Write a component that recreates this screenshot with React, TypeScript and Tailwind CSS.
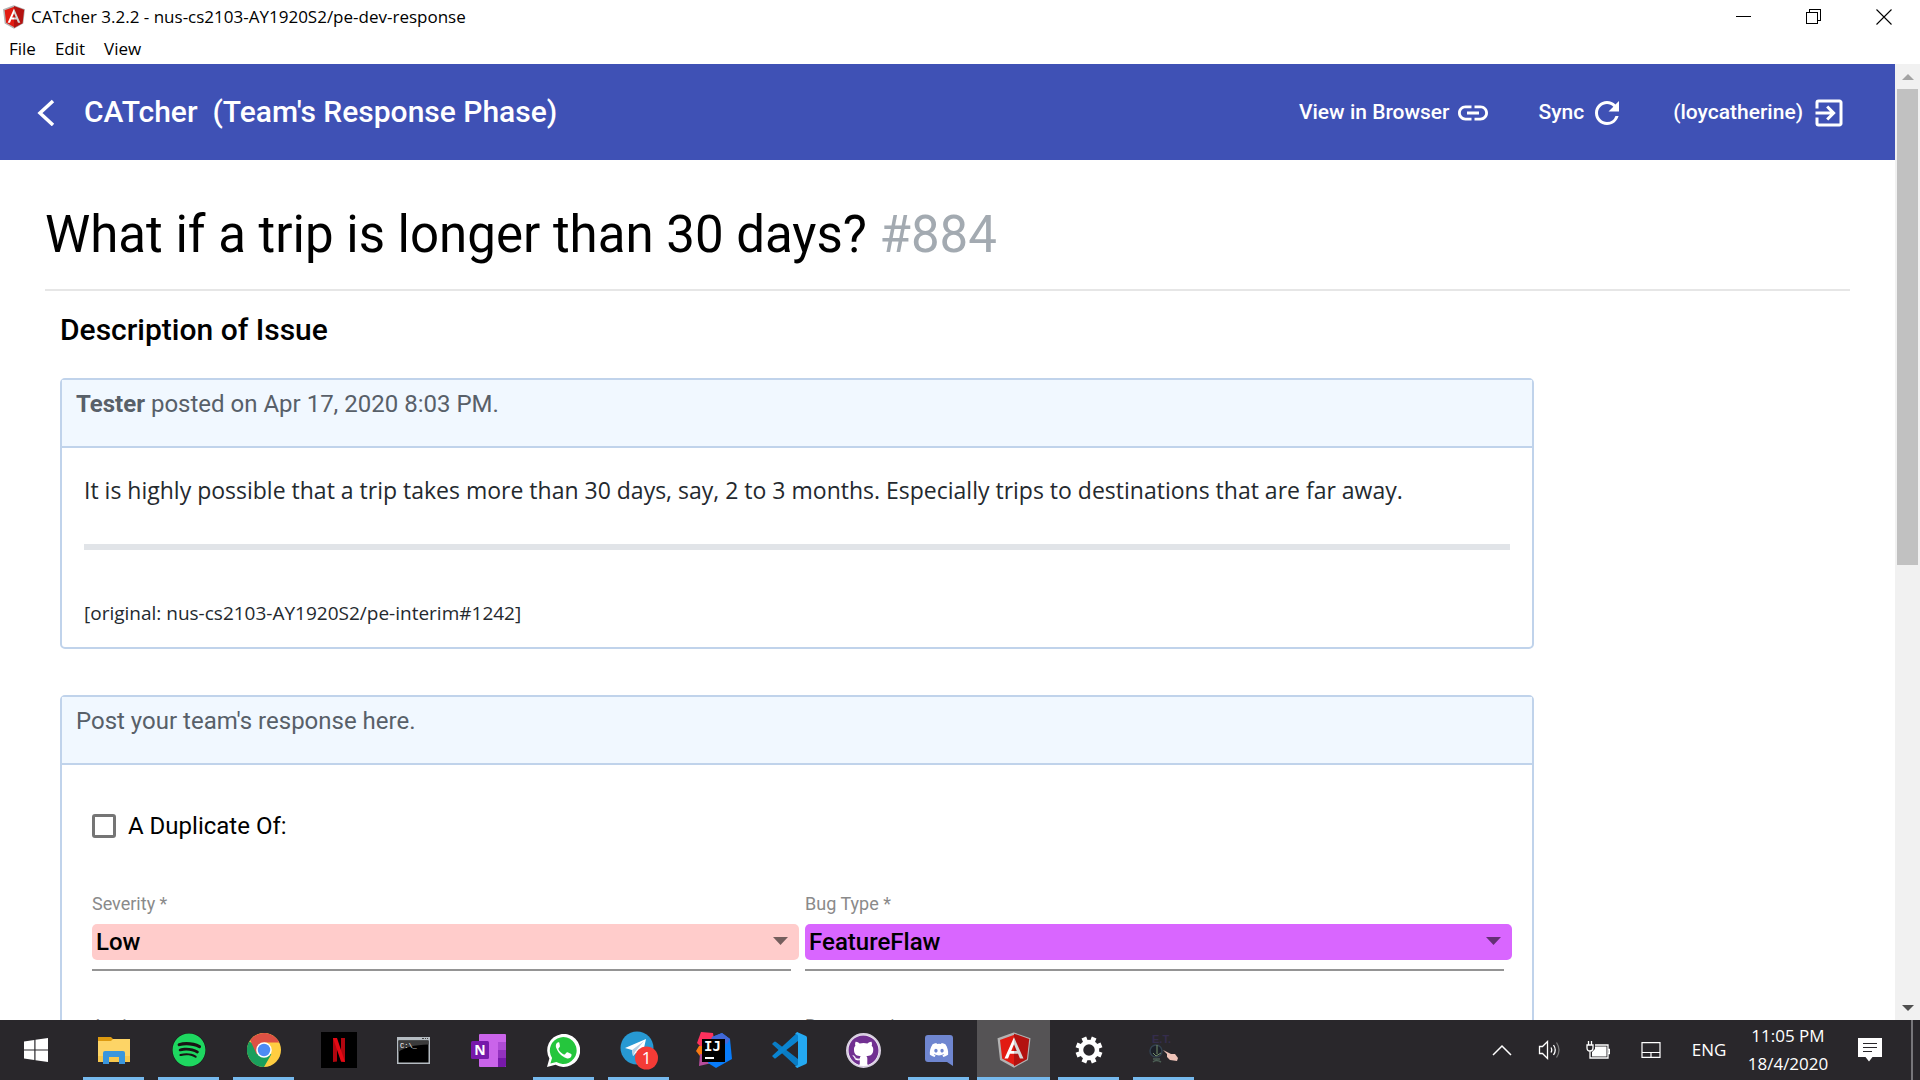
import type { ReactNode } from "react";
import { MdExitToApp, MdLink, MdRefresh } from "react-icons/md";
import { FaDiscord, FaGithub, FaSpotify } from "react-icons/fa";

function AngularLogo({ className }: { className: string }) {
  return (
    <svg viewBox="22 20 206 220" className={className} aria-hidden="true">
      <path d="M125 30 31.9 63.2l14.2 123.1L125 230l78.9-43.7 14.2-123.1z" fill="#e21b12" stroke="#b3b3b3" strokeWidth="14" />
      <path d="M125 30v200l78.9-43.7 14.2-123.1z" fill="#b31210" />
      <path d="M125 52 66.8 182.6h21.7l11.7-29.2H125v-18h-17l17-40.9z" fill="#fff" />
      <path d="m125 52 58 130.6h-21.700l-11.700-29.200H125v-18h17l-17-40.900z" fill="#d6d6d6" />
    </svg>
  );
}

function TitleBar() {
  return (
    <div className="bg-white font-['Open_Sans',sans-serif] text-[17px] text-black">
      <div className="flex h-[34px] items-center">
        <AngularLogo className="ml-0.5 h-6 w-6" />
        <span className="ml-[5px] flex-1 whitespace-nowrap">CATcher 3.2.2 - nus-cs2103-AY1920S2/pe-dev-response</span>
        <div className="flex h-full pr-px">
          <button aria-label="Minimize" className="flex w-[70px] items-center justify-center">
            <svg className="h-4 w-4" viewBox="0 0 16 16" shapeRendering="crispEdges"><path d="M0 7.500h15" stroke="#000" /></svg>
          </button>
          <button aria-label="Restore" className="flex w-[70px] items-center justify-center">
            <svg className="h-4 w-4" viewBox="0 0 16 16" fill="none" stroke="#000" shapeRendering="crispEdges">
              <path d="M.5 3.500h11v11H.5zM3.500 3.500v-3h11v11h-3" />
            </svg>
          </button>
          <button aria-label="Close" className="flex w-[70px] items-center justify-center">
            <svg className="h-4 w-4" viewBox="0 0 16 16"><path d="m.5.5 15 15m0-15-15 15" stroke="#000" strokeWidth="1.100" /></svg>
          </button>
        </div>
      </div>
      <nav className="flex h-[30px] items-start gap-[19px] pl-[9px]">
        <button className="leading-[30px]">File</button>
        <button className="leading-[30px]">Edit</button>
        <button className="leading-[30px]">View</button>
      </nav>
    </div>
  );
}

function AppHeader() {
  return (
    <header className="flex h-24 items-center bg-[#3f51b5] pr-12 pl-9 font-medium text-white">
      <button aria-label="Back" className="w-12">
        <svg className="h-7 w-5" viewBox="0 0 20 28" fill="none" stroke="currentColor" strokeWidth="3.500"><path d="M17 3 4 15l13 12" /></svg>
      </button>
      <h2 className="flex-1 text-[30px] leading-9 whitespace-pre">CATcher  (Team's Response Phase)</h2>
      <div className="flex items-center gap-12 pt-0.5 text-[21px]">
        <a href="#browser" className="flex items-center gap-[5px]">
          View in Browser <MdLink className="h-9 w-9" />
        </a>
        <button className="flex items-center gap-[5px]">
          Sync <MdRefresh className="h-9 w-9" />
        </button>
        <button className="flex items-center gap-2">
          (loycatherine) <MdExitToApp className="h-9 w-9" />
        </button>
      </div>
    </header>
  );
}

function Card({ title, children }: { title: ReactNode; children: ReactNode }) {
  return (
    <section className="rounded-[5px] border-2 border-[#c0d3eb] bg-white">
      <div className="border-b-2 border-[#c0d3eb] bg-[#f1f8ff] px-[14px] pt-1.5 pb-6 text-2xl leading-9 text-[#586069]">{title}</div>
      {children}
    </section>
  );
}

function Field({ id, label, value, color }: { id: string; label: string; value: string; color: string }) {
  return (
    <div className="flex flex-col">
      <label htmlFor={id} className="text-lg leading-6 text-[#8a8a8a]">{label}</label>
      <div className="relative mt-2">
        <select id={id} defaultValue={value} className={"block h-9 w-full appearance-none rounded-[5px] pl-1 text-2xl leading-9 font-medium text-black " + color}>
          <option>{value}</option>
        </select>
        <svg className="pointer-events-none absolute top-[13px] right-[11px] h-2 w-[15px]" viewBox="0 0 15 8"><path d="M0 0h15L7.500 8z" fill="#000" fillOpacity=".54" /></svg>
      </div>
      <div className="mt-[9px] mr-2 h-0.5 bg-[#949494]" />
    </div>
  );
}

function IssuePage() {
  return (
    <main className="px-[45px] pt-[45px]">
      <h1 className="border-b-2 border-[#e6e6e6] pb-6 text-[51px] leading-[60px] text-black">
        What if a trip is longer than 30 days? <span className="text-[#a3aab1]">#884</span>
      </h1>
      <div className="w-5/6 px-[15px] pt-[19px]">
        <h3 className="mb-7 text-[30px] leading-10 font-medium text-black">Description of Issue</h3>
        <Card title={<><strong className="font-bold">Tester</strong> posted on Apr 17, 2020 8:03 PM.</>}>
          <div className="px-[22px] pt-6 pb-5 font-['Open_Sans',sans-serif] text-[#24292e]">
            <p className="text-[23px] leading-9">
              It is highly possible that a trip takes more than 30 days, say, 2 to 3 months. Especially trips to destinations that are far away.
            </p>
            <hr className="mt-9 mb-[50px] h-1.5 border-0 bg-[#e1e4e8]" />
            <p className="text-[19px] leading-[27px]">[original: nus-cs2103-AY1920S2/pe-interim#1242]</p>
          </div>
        </Card>
        <div className="mt-[46px]">
          <Card title="Post your team's response here.">
            <div className="pt-[43px] pr-5 pb-10 pl-[30px]">
              <label className="mb-12 flex w-fit items-center gap-3 text-2xl leading-9 text-black">
                <input type="checkbox" className="h-6 w-6 appearance-none rounded-[3px] border-3 border-[#757575] checked:bg-[#3f51b5]" />
                A Duplicate Of:
              </label>
              <div className="grid grid-cols-2 gap-x-1.5 gap-y-[43px]">
                <Field id="severity" label="Severity *" value="Low" color="bg-[#ffcccb]" />
                <Field id="type" label="Bug Type *" value="FeatureFlaw" color="bg-[#d966ff]" />
                <Field id="assignee" label="Assignee" value="" color="bg-white" />
                <Field id="response" label="Response *" value="" color="bg-white" />
              </div>
            </div>
          </Card>
        </div>
      </div>
    </main>
  );
}

function ScrollBar() {
  return (
    <div className="flex w-[25px] flex-col bg-[#f1f1f1] px-0.5">
      <div className="flex h-[25px] items-center justify-center">
        <svg className="h-1.5 w-3" viewBox="0 0 12 6"><path d="M0 6h12L6 0z" fill="#a3a3a3" /></svg>
      </div>
      <div className="flex-1">
        <div className="h-[52.500%] bg-[#c1c1c1]" />
      </div>
      <div className="flex h-[25px] items-center justify-center">
        <svg className="h-1.5 w-3" viewBox="0 0 12 6"><path d="M0 0h12L6 6z" fill="#505050" /></svg>
      </div>
    </div>
  );
}

const glyph = "h-9 w-9";

function TelegramIcon() {
  return (
    <svg className="h-10 w-10" viewBox="0 0 40 40" aria-hidden="true">
      <circle cx="18" cy="18" r="16.500" fill="#2799d3" />
      <path d="M6 18 27 9l-4 18-6-4-3 3-1-6z" fill="#fff" />
      <path d="m13 20 12-9-9 11-2 4z" fill="#b5cfe4" />
      <circle cx="27.500" cy="28" r="11.500" fill="#f43b36" />
      <text x="27.500" y="34" textAnchor="middle" fontSize="17" fill="#fff" fontFamily="Open Sans">1</text>
    </svg>
  );
}

const tasks: { name: string; open?: boolean; active?: boolean; icon: ReactNode }[] = [
  {
    name: "File Explorer",
    open: true,
    icon: (
      <svg className="h-8 w-8" viewBox="0 0 32 32">
        <path d="M0 3h13l2 2v4H0z" fill="#dd9a10" />
        <path d="M0 7h13l2-2h17v23H0z" fill="#fdd466" />
        <path d="M0 22h32v6H0z" fill="#f8c84d" />
        <path d="M5 30V19q0-2 2-2h18q2 0 2 2v11h-6v-7H11v7z" fill="#3a96dd" />
      </svg>
    ),
  },
  {
    name: "Spotify",
    open: true,
    icon: <span className="rounded-full bg-[#191414]"><FaSpotify className="h-[34px] w-[34px] text-[#1ed760]" /></span>,
  },
  {
    name: "Chrome",
    open: true,
    icon: (
      <svg className="h-[34px] w-[34px]" viewBox="0 0 48 48">
        <circle cx="24" cy="24" r="24" fill="#ffcd41" />
        <path d="M24 24 3.200 12A24 24 0 0 0 24 48l10.400-18z" fill="#1a9f5c" />
        <path d="M24 13.500h21.600A24 24 0 0 0 4.500 10.200L13.600 30 24 24z" fill="#dd5144" />
        <circle cx="24" cy="24" r="11" fill="#fff" />
        <circle cx="24" cy="24" r="8.800" fill="#4c8bf5" />
      </svg>
    ),
  },
  {
    name: "Netflix",
    icon: (
      <svg className={glyph} viewBox="0 0 36 36">
        <path d="M0 0h36v36H0z" fill="#000" />
        <path d="M12 6h4v23.500l-4 .5zM20 6h4v24l-4-.5z" fill="#b1060f" />
        <path d="M12 6h4l8 24-4-.5z" fill="#e50914" />
      </svg>
    ),
  },
  {
    name: "Command Prompt",
    icon: (
      <svg className="h-[27px] w-[33px]" viewBox="0 0 33 27">
        <path d="M0 0h33v27H0z" fill="#b5bcc2" />
        <path d="M1.500 3.500h30v22h-30z" fill="#000" />
        <path d="M1.500 3.500h30v4Q10 8 1.500 15z" fill="#3b3b3b" />
        <text x="3" y="10.500" fontSize="7" fill="#fff" fontFamily="Liberation Mono">C:\_</text>
        <path d="M25 1.500h2m1 0h1m1 0h1" stroke="#444" />
      </svg>
    ),
  },
  {
    name: "OneNote",
    icon: (
      <svg className="h-[33px] w-9" viewBox="0 0 36 33">
        <path d="M9 0h25q1 0 1 1v31q0 1-1 1H9q-1 0-1-1V1q0-1 1-1z" fill="#ca64ea" />
        <path d="M27 8h8v8h-8z" fill="#ae4bd5" /><path d="M27 16h8v8h-8z" fill="#9332bf" /><path d="M27 24h8v8l-1 1h-7z" fill="#7719aa" />
        <rect y="7" width="18" height="18" rx="1.500" fill="#7719aa" />
        <text x="9" y="21" textAnchor="middle" fontSize="14" fontWeight="700" fill="#fff" fontFamily="Open Sans">N</text>
      </svg>
    ),
  },
  {
    name: "WhatsApp",
    open: true,
    icon: (
      <svg className="h-[33px] w-[33px]" viewBox="0 0 32 32">
        <path d="M0 32l2.300-8.200A16 16 0 1 1 8.300 29.800z" fill="#fff" />
        <path d="m3.300 28.700 1.600-5.500a13 13 0 1 1 4.200 4z" fill="#25c63d" />
        <path d="M11 8c-2 .5-3 3-2 5.500 2 5 5 8 10 10 2 .7 4.500-.5 4.800-3 0-.8-.1-1-.8-1.300l-3-1.500c-.6-.2-1 0-1.300.4l-1.200 1.500c-.4.400-.8.400-1.200.2-2.300-1-4-2.700-5.200-5-.2-.4-.1-.7.200-1l1-1.300c.3-.3.3-.6.200-1L12 8.600c-.2-.5-.5-.6-1-.6z" fill="#fff" />
      </svg>
    ),
  },
  { name: "Telegram", open: true, icon: <TelegramIcon /> },
  {
    name: "IntelliJ IDEA",
    icon: (
      <svg className={glyph} viewBox="0 0 36 36">
        <path d="M5 0 17 1l2 14-12 2-6-6z" fill="#fe315d" />
        <path d="m3 14-3 5 4 5 5-1V14z" fill="#f97a12" />
        <path d="m4 22-1 12 13-3 2-8z" fill="#b74c9b" />
        <path d="m16 5 10-4 8 6 2 20-16 9-8-5z" fill="#087cfa" />
        <path d="m16 5 10-4 8 6-3 5-16-3z" fill="#4268d8" />
        <path d="M6 7h23v23H6z" fill="#000" />
        <text x="8" y="19" fontSize="14" fontWeight="700" fill="#fff" fontFamily="DejaVu Sans Mono">IJ</text>
        <path d="M9 25h9v2H9z" fill="#fff" />
      </svg>
    ),
  },
  {
    name: "Visual Studio Code",
    icon: (
      <svg className={glyph} viewBox="0 0 36 36">
        <path d="m1 12 2-2q1-1 2 0l22 17v9z" fill="#0a7cc4" />
        <path d="m1 24 2 2q1 1 2 0L27 9V0z" fill="#0a84d0" />
        <path d="m26 0 9 4q1 .500 1 2v24q0 1.500-1 2l-9 4-2-2q3 0 3-2V4q0-2-3-2z" fill="#24a9f2" />
      </svg>
    ),
  },
  {
    name: "GitHub Desktop",
    icon: (
      <span className="rounded-full border-2 border-[#d8cfe0] bg-white">
        <FaGithub className="h-[31px] w-[31px] text-[#713091]" />
      </span>
    ),
  },
  {
    name: "Discord",
    open: true,
    icon: (
      <span className="relative flex h-[31px] w-7 items-start justify-center">
        <svg className="h-[31px] w-7" viewBox="0 0 28 31"><path d="M3 0h22q3 0 3 3v28l-6-4H3q-3 0-3-3V3q0-3 3-3z" fill="#6f86d0" /></svg>
        <FaDiscord className="absolute top-[5px] left-[4px] h-5 w-5 text-white" />
      </span>
    ),
  },
  { name: "CATcher", open: true, active: true, icon: <AngularLogo className={glyph} /> },
  {
    name: "Settings",
    open: true,
    icon: (
      <svg className="h-7 w-7" viewBox="0 0 28 28">
        <circle cx="14" cy="14" r="8" fill="none" stroke="#fff" strokeWidth="4.500" />
        <g stroke="#fff" strokeWidth="5">
          <path d="M14 .5v5m0 17v5M.5 14h5m17 0h5" transform="rotate(22.500 14 14)" />
          <path d="M14 .5v5m0 17v5M.5 14h5m17 0h5" transform="rotate(67.500 14 14)" />
        </g>
      </svg>
    ),
  },
  {
    name: "E.T.",
    open: true,
    icon: (
      <svg className="h-8 w-8" viewBox="0 0 32 32">
        <text x="4" y="9" fontSize="11" fontWeight="700" fill="#352d4d" fontFamily="Liberation Sans">E.T.</text>
        <circle cx="8" cy="17" r="6" fill="#1b1f28" stroke="#33414f" strokeWidth="1.500" />
        <path d="M9 11v9M5 19l3 3 5-3" stroke="#76906c" fill="none" />
        <path d="M5 25h7M5 28q3-3 8 0" stroke="#4c5f55" strokeWidth="1.500" fill="none" />
        <path d="m15 16 8 4 4 0 3 4-1 3-7-1-3-3v-3z" fill="#efc3b8" />
      </svg>
    ),
  },
];

function Taskbar() {
  return (
    <footer className="flex h-[60px] items-stretch justify-between bg-[#29272b] font-['Open_Sans',sans-serif] text-[17px] text-white">
      <div className="flex">
        <button aria-label="Start" className="mr-1 flex w-[72px] items-center justify-center">
          <svg className="h-6 w-6" viewBox="0 0 24 24" fill="#fff">
            <path d="M0 3.500 10.300 2v9.500H0zM11.500 1.800 24 0v11.500H11.500zM0 12.500h10.300V22L0 20.500zM11.500 12.500H24V24l-12.500-1.800z" />
          </svg>
        </button>
        {tasks.map((t) => (
          <button key={t.name} aria-label={t.name} className="flex w-[75px] justify-center">
            <span className={t.active ? "flex w-[73px] flex-col bg-[#555355]" : "flex w-[61px] flex-col"}>
              <span className="flex flex-1 items-center justify-center pt-[3px]">{t.icon}</span>
              <span className={t.open ? "h-[3px] bg-[#76b9ed]" : "h-[3px]"} />
            </span>
          </button>
        ))}
      </div>
      <div className="flex">
        <button aria-label="Show hidden icons" className="flex w-12 items-center justify-center">
          <svg className="h-3 w-5" viewBox="0 0 20 12" fill="none" stroke="#fff" strokeWidth="1.500"><path d="m1 11 9-9 9 9" /></svg>
        </button>
        <button aria-label="Volume" className="flex w-12 items-center justify-center">
          <svg className="h-5 w-6" viewBox="0 0 24 20" fill="none" stroke="#fff" strokeWidth="1.300">
            <path d="M1.500 6.500h3l5-5v17l-5-5h-3zM13 7.500q1.500 2.500 0 5M15.500 5q3.500 5 0 10" />
            <path d="M18.500 2.500q5 7.500 0 15" stroke="#777" />
          </svg>
        </button>
        <button aria-label="Battery" className="flex w-12 items-center justify-center">
          <svg className="h-5 w-6" viewBox="0 0 24 20" fill="none" stroke="#fff" strokeWidth="1.300">
            <path d="M1 5h6v3q0 3-3 3t-3-3zM2.500 5V1m3 4V1M4 11v7h18V5H9M22.500 9.500h1v4h-1" />
            <path d="M6 16.500V12l3-3V6.500h11.500v10z" fill="#fff" stroke="none" />
          </svg>
        </button>
        <button aria-label="Touchpad" className="flex w-[58px] items-center justify-center">
          <svg className="h-4 w-5" viewBox="0 0 20 16" fill="none" stroke="#fff" strokeWidth="1.200"><path d="M1 .6h18v14.800H1zM1 10.500h18M10 10.500v5" /></svg>
        </button>
        <button className="w-[58px] text-[17px]">ENG</button>
        <button className="w-[100px] text-center leading-7">
          <span className="block">11:05 PM</span>
          <span className="block">18/4/2020</span>
        </button>
        <button aria-label="Notifications" className="flex w-16 items-center justify-center">
          <svg className="h-6 w-6" viewBox="0 0 24 24"><path d="M0 0h24v19H14.500L11 23.500 7.500 19H0z" fill="#fff" /><path d="M5 5.500h14M5 9.500h14M5 13.500h9" stroke="#29272b" strokeWidth="1.200" /></svg>
        </button>
        <button aria-label="Show desktop" className="ml-[9px] w-[9px] border-l-2 border-[#77767a]" />
      </div>
    </footer>
  );
}

export default function App() {
  return (
    <div className="flex h-screen flex-col overflow-hidden bg-white font-['Roboto',sans-serif]">
      <TitleBar />
      <div className="flex min-h-0 flex-1">
        <div className="min-w-0 flex-1 overflow-hidden">
          <AppHeader />
          <IssuePage />
        </div>
        <ScrollBar />
      </div>
      <Taskbar />
    </div>
  );
}
